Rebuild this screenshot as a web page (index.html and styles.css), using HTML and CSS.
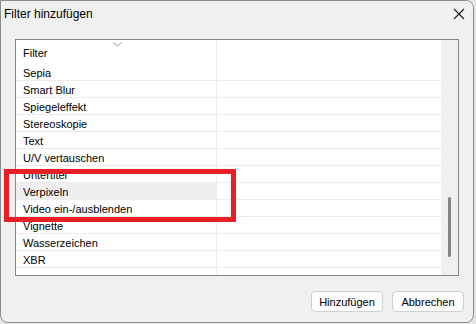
FILE: index.html
```html
<!DOCTYPE html>
<html lang="de">
<head>
    <meta charset="UTF-8">
    <meta name="viewport" content="width=device-width, initial-scale=1.0">
    <title>Filter hinzufügen</title>
    <link rel="stylesheet" href="styles.css">
</head>
<body>
    <div class="window">
        <div class="titlebar">
            <span class="title">Filter hinzufügen</span>
            <svg class="close" width="12" height="12" viewBox="0 0 12 12">
                <path d="M1 1 L11 11 M11 1 L1 11" stroke="#1a1a1a" stroke-width="1.1" fill="none"/>
            </svg>
        </div>

        <div class="content">
            <div class="listbox">
                <div class="list">
                    <div class="header">
                        <div class="cell name">
                            Filter
                            <svg class="sort" width="9" height="5" viewBox="0 0 9 5">
                                <path d="M0.5 0.5 L4.5 4 L8.5 0.5" stroke="#9a9a9a" stroke-width="1" fill="none"/>
                            </svg>
                        </div>
                        <div class="cell rest"></div>
                    </div>
                    <div class="row"><div class="cell name">Sepia</div><div class="cell rest"></div></div>
                    <div class="row"><div class="cell name">Smart Blur</div><div class="cell rest"></div></div>
                    <div class="row"><div class="cell name">Spiegeleffekt</div><div class="cell rest"></div></div>
                    <div class="row"><div class="cell name">Stereoskopie</div><div class="cell rest"></div></div>
                    <div class="row"><div class="cell name">Text</div><div class="cell rest"></div></div>
                    <div class="row"><div class="cell name">U/V vertauschen</div><div class="cell rest"></div></div>
                    <div class="row"><div class="cell name">Untertitel</div><div class="cell rest"></div></div>
                    <div class="row selected"><div class="cell name">Verpixeln</div><div class="cell rest"></div></div>
                    <div class="row"><div class="cell name">Video ein-/ausblenden</div><div class="cell rest"></div></div>
                    <div class="row"><div class="cell name">Vignette</div><div class="cell rest"></div></div>
                    <div class="row"><div class="cell name">Wasserzeichen</div><div class="cell rest"></div></div>
                    <div class="row"><div class="cell name">XBR</div><div class="cell rest"></div></div>
                    <div class="row tail"><div class="cell name"></div><div class="cell rest"></div></div>
                </div>
                <div class="scrollbar">
                    <div class="thumb"></div>
                </div>
            </div>

            <div class="buttons">
                <button class="btn">Hinzufügen</button>
                <button class="btn">Abbrechen</button>
            </div>
        </div>

        <!-- Markierung -->
        <div class="highlight"></div>
    </div>
</body>
</html>
```

FILE: styles.css
```css
body {
    margin: 0;
    background: #e6e6e6;
    font-family: "Liberation Sans", Arial, sans-serif;
    font-size: 11px;
    color: #000000;
    overflow: hidden;
}

.window {
    position: relative;
    width: 472px;
    height: 321px;
    background: #f0f0f0;
    border: 1px solid #8c8c8c;
    border-radius: 0 8px 8px 8px;
    overflow: hidden;
}

.titlebar {
    height: 25px;
    display: flex;
    align-items: center;
    justify-content: space-between;
    padding: 0 8px 0 3px;
    background: #f0f0f0;
}

.title {
    font-size: 12px;
    color: #000000;
    padding-top: 1px;
}

.close {
    margin-top: 1px;
}

.content {
    padding: 13px 14px 0 14px;
}

.listbox {
    display: flex;
    height: 235px;
    border: 1px solid #82868d;
    background: #ffffff;
}

.list {
    flex: 1;
    display: flex;
    flex-direction: column;
}

.header {
    display: flex;
    height: 24px;
}

.header .cell {
    border-right: 1px solid #e5e5e5;
    padding-top: 3px;
}

.header .rest {
    border-right: none;
}

.row {
    display: flex;
    height: 16px;
    border-bottom: 1px solid #ececec;
}

.row.tail {
    flex: 1;
    border-bottom: none;
}

.cell {
    display: flex;
    align-items: center;
    box-sizing: border-box;
}

.cell.name {
    position: relative;
    width: 201px;
    padding-left: 7px;
    padding-top: 2px;
    border-right: 1px solid #ececec;
    line-height: 14px;
}

.cell.rest {
    flex: 1;
}

.row.selected .name {
    background: #efefef;
}

.sort {
    position: absolute;
    top: 2px;
    left: 97px;
}

.scrollbar {
    width: 17px;
    background: #f0f0f0;
    position: relative;
}

.thumb {
    position: absolute;
    left: 7px;
    top: 157px;
    width: 3px;
    height: 60px;
    border-radius: 2px;
    background: #858585;
}

.buttons {
    display: flex;
    justify-content: flex-end;
    gap: 9px;
    margin-top: 15px;
    margin-right: -5px;
}

.btn {
    font-family: "Liberation Sans", Arial, sans-serif;
    font-size: 11px;
    color: #000000;
    width: 72px;
    height: 21px;
    padding: 0;
    background: #fdfdfd;
    border: 1px solid #d0d0d0;
    border-radius: 4px;
}

.highlight {
    position: absolute;
    left: 3px;
    top: 168px;
    width: 222px;
    height: 43px;
    border: 5px solid #e81f27;
}
```
